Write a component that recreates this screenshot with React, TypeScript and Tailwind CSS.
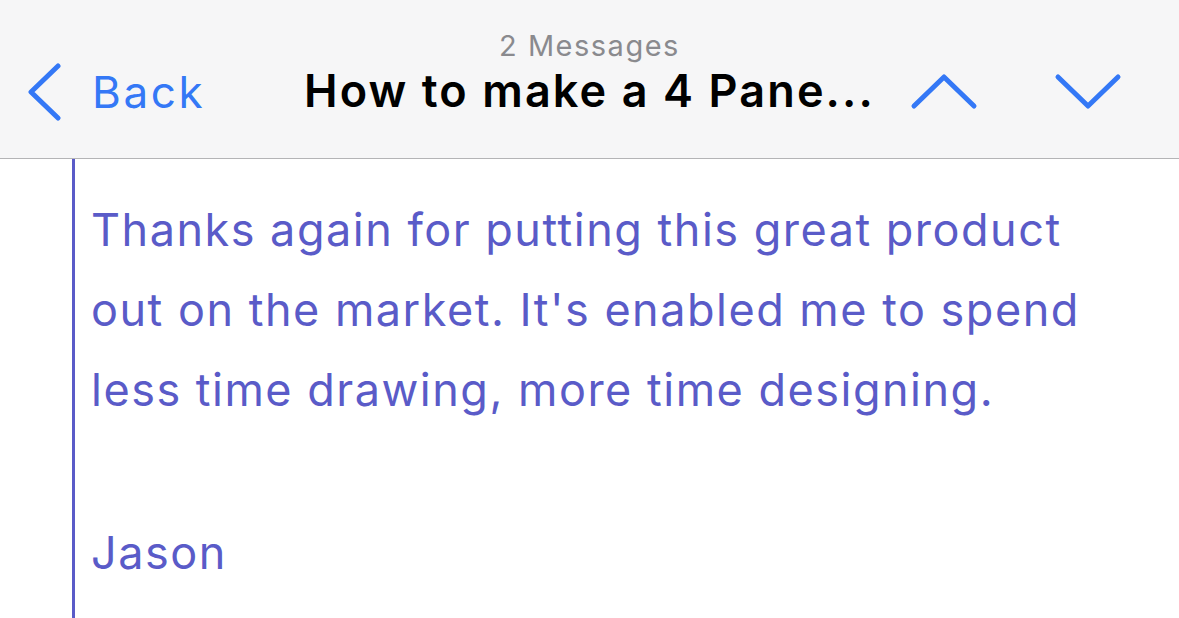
import React from "react";

const Chevron = (props: { d: string; className?: string; w: number; h: number }) => (
    <svg width={props.w} height={props.h} viewBox={`0 0 ${props.w} ${props.h}`} fill="none" className={props.className}>
        <path d={props.d} stroke="currentColor" strokeWidth={5} strokeLinecap="round" strokeLinejoin="round" />
    </svg>
);

export default function App() {
    return (
        <div className="w-[1179px] h-[618px] overflow-hidden bg-white" style={{ fontFamily: "Inter, 'Noto Sans', sans-serif" }}>
            <div className="h-[159px] bg-[#f6f6f7] border-b border-[#b4b4b6] grid grid-cols-[1fr_auto_1fr]">
                <div className="flex items-center pl-[26px] pt-[26px] text-[#3478f6]">
                    <Chevron w={36} h={58} d="M32 3 L5 29 L32 55" className="mr-[30px]" />
                    <span className="text-[44px] leading-none tracking-[2.6px]">Back</span>
                </div>
                <div className="flex flex-col items-center pt-[30px]">
                    <span className="text-[29px] leading-[32px] text-[#8a8a8e] tracking-[1.5px]">2 Messages</span>
                    <span className="text-[45px] leading-[58px] font-semibold text-black tracking-[2.1px]">How to make a 4 Pane...</span>
                </div>
                <div className="flex items-center justify-end pr-[57px] pt-[26px] text-[#3478f6] gap-[76px]">
                    <Chevron w={68} h={40} d="M4 34 L34 5 L64 34" />
                    <Chevron w={68} h={40} d="M4 5 L34 34 L64 5" />
                </div>
            </div>
            <div className="ml-[72px] border-l-[3px] border-[#5a5bc8] h-[459px] pl-[16px] pt-[31px] text-[#5a5bc8] text-[45px] leading-[80px] tracking-[1.5px]">
                <p>Thanks again for putting this great product</p>
                <p>out on the market. It's enabled me to spend</p>
                <p>less time drawing, more time designing.</p>
                <p>&nbsp;</p>
                <p className="mt-[3px]">Jason</p>
            </div>
        </div>
    );
}
